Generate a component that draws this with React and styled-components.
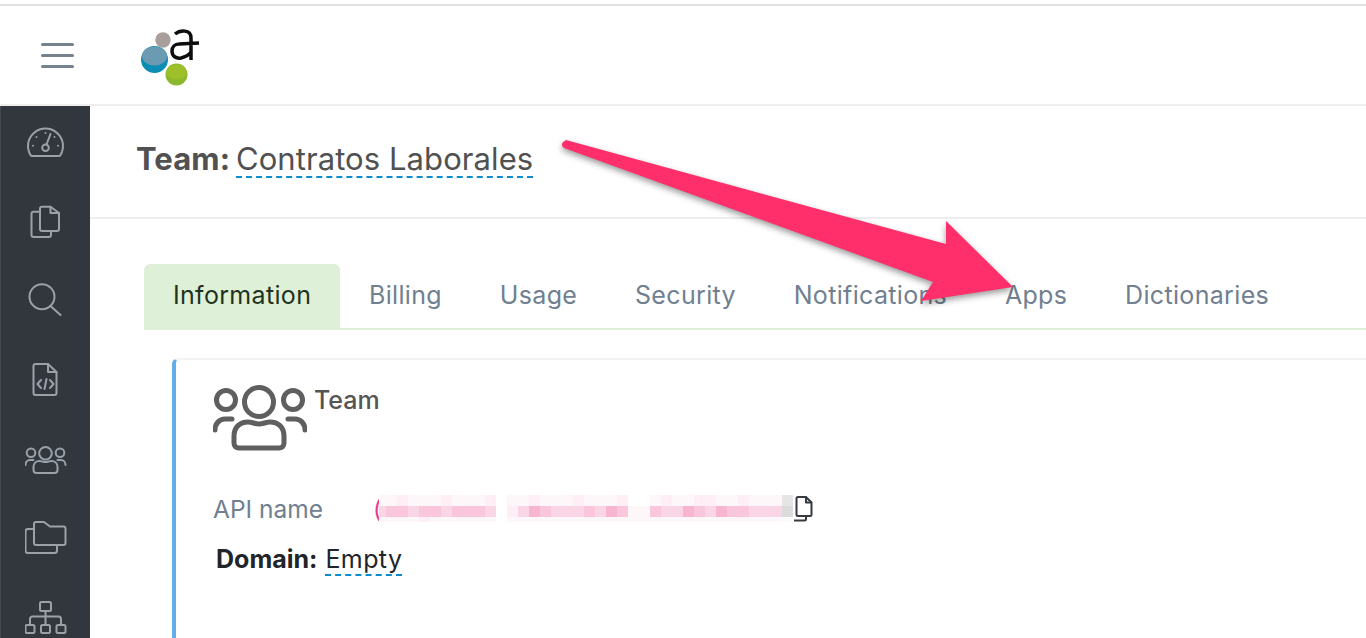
import React from "react"
import styled, { createGlobalStyle } from "styled-components"

const GlobalStyle = createGlobalStyle`
  html, body {
    margin: 0;
    height: 100%;
    background: #fff;
    overflow: hidden;
  }
  body {
    font-family: Inter, "Liberation Sans", sans-serif;
  }
`

const Page = styled.div`
  position: relative;
  width: 1366px;
  height: 638px;
  overflow: hidden;
  padding-top: 4px;
  box-sizing: border-box;
  display: flex;
  flex-direction: column;
`

const Header = styled.header`
  flex: none;
  height: 98px;
  border-top: 2px solid #e1e1e3;
  border-bottom: 2px solid #eee;
  display: flex;
  align-items: center;
  padding-left: 41px;
  gap: 66px;
`

const Burger = styled.div`
  width: 33px;
  display: flex;
  flex-direction: column;
  gap: 8px;
  span {
    display: block;
    height: 3px;
    border-radius: 2px;
    background: #76838f;
  }
`

const Body = styled.div`
  flex: 1;
  display: flex;
  min-height: 0;
`

const Sidebar = styled.nav`
  flex: none;
  width: 89px;
  border-left: 1px solid #44494f;
  background: #32373e;
  display: flex;
  flex-direction: column;
  align-items: center;
  gap: 39px;
  padding-top: 16px;
  svg {
    display: block;
    flex: none;
    width: 42px;
    height: 40px;
    fill: none;
    stroke: #9aa1a9;
    stroke-width: 2;
    stroke-linecap: round;
    stroke-linejoin: round;
  }
`

const Main = styled.main`
  flex: 1;
  min-width: 0;
`

const TitleBar = styled.div`
  height: 113px;
  box-sizing: border-box;
  border-bottom: 2px solid #eee;
  padding: 34px 0 0 46px;
  font-size: 31px;
  letter-spacing: 0.08px;
  line-height: 38px;
  color: #515151;
`

const Strong = styled.b`
  font-weight: 700;
`

const Editable = styled.span`
  display: inline-block;
  border-bottom: 2px dashed #0c8ccd;
  line-height: ${(p) => p.$line}px;
  margin-left: ${(p) => p.$shift}px;
  letter-spacing: ${(p) => p.$track}px;
`

const Content = styled.div`
  padding: 45px 0 0 54px;
`

const Tabs = styled.div`
  display: flex;
  border-bottom: 2px solid #dff0d8;
`

const Tab = styled.div`
  height: 64px;
  box-sizing: border-box;
  padding: 0 28.9px 2px;
  display: flex;
  align-items: center;
  font-size: 25px;
  letter-spacing: 0.33px;
  border-radius: 6px 6px 0 0;
  color: ${(p) => (p.$active ? "#1f3320" : "#708090")};
  background: ${(p) => (p.$active ? "#dff0d8" : "transparent")};
`

const Card = styled.section`
  margin: 28px 0 0 28px;
  height: 300px;
  border-left: 4px solid #63aee9;
  border-top: 2px solid #f2f2f2;
  border-top-left-radius: 6px;
  padding: 25px 0 0 37px;
`

const CardHead = styled.div`
  display: flex;
  align-items: flex-start;
  gap: 7px;
  font-size: 25px;
  font-weight: 500;
  color: #555;
  svg {
    display: block;
    width: 94px;
    height: 66px;
    fill: none;
    stroke: #5f5f5f;
    stroke-width: 5;
    stroke-linecap: round;
    stroke-linejoin: round;
  }
`

const CardTitle = styled.span`
  line-height: 30px;
`

const ApiRow = styled.div`
  display: flex;
  align-items: center;
  margin-top: 42px;
  height: 32px;
`

const ApiLabel = styled.span`
  width: 160px;
  flex: none;
  font-size: 24.5px;
  color: #708090;
`

const Paren = styled.span`
  font-size: 24px;
  color: #e83e8c;
  width: 6px;
  flex: none;
`

const Blur = styled.div`
  position: relative;
  display: flex;
  flex-direction: column;
  flex: none;
  margin-top: -1px;
  background: #fff;
`

const BlurRow = styled.div`
  display: flex;
`

const BlurCell = styled.i`
  display: block;
  width: 11px;
  height: ${(p) => p.$h}px;
  background: rgba(${(p) => (p.$grey ? "170,170,170" : "240,120,170")}, ${(p) => p.$a});
  &:first-child {
    width: 7px;
  }
`

const CopyIcon = styled.svg`
  flex: none;
  width: 20px;
  height: 26px;
  fill: none;
  stroke: #343a40;
  stroke-width: 2;
  stroke-linejoin: round;
`

const DomainRow = styled.div`
  margin: 18px 0 0 3px;
  font-size: 25px;
  line-height: 32px;
  color: #212529;
`

const Arrow = styled.svg`
  position: absolute;
  left: 0;
  top: 0;
  width: 1366px;
  height: 638px;
  pointer-events: none;
  filter: drop-shadow(0 3px 3px rgba(0, 0, 0, 0.4));
`

const tabs = ["Information", "Billing", "Usage", "Security", "Notifications", "Apps", "Dictionaries"]

const top = [1, 1, 2, 1, 1, 1, 2, 1, 1, 1, 2, 0, 1, 1, 2, 1, 1, 1, 2, 1, 1, 1, 2, 0, 0, 1, 2, 1, 1, 2, 2, 1, 1, 2, 1, 1, 1, 3]
const mid = [3, 4, 4, 3, 4, 4, 3, 4, 4, 4, 3, 0, 2, 3, 5, 4, 3, 3, 3, 4, 3, 5, 4, 1, 1, 4, 3, 3, 5, 4, 3, 5, 4, 4, 3, 3, 3, 4]
const low = [1, 1, 1, 1, 2, 1, 1, 1, 1, 1, 1, 0, 1, 1, 1, 1, 1, 1, 1, 1, 1, 1, 1, 1, 1, 1, 1, 1, 1, 1, 1, 1, 1, 1, 1, 1, 1, 1]
const alpha = [0, 0.06, 0.12, 0.3, 0.42, 0.55]

const GaugeIcon = () => (
  <svg viewBox="0 0 42 40">
    <path d="M5.500 33A17.500 17.500 0 1 1 35.500 33a2 2 0 0 1-2 1H7.500a2 2 0 0 1-2-1z" />
    <circle cx="20.500" cy="25.700" r="3.300" />
    <path d="M21.500 22.500L25.500 12" />
    <path d="M20.500 11v.1M11.500 15v.1M29.500 15v.1M8 23.700v.1M33 23.700v.1" />
  </svg>
)

const PagesIcon = () => (
  <svg viewBox="0 0 42 40">
    <path d="M15 10.700H8.500a2 2 0 0 0-2 2V34a2 2 0 0 0 2 2H24a2 2 0 0 0 2-2v-4" />
    <path d="M17 5.700h8.500L34 12v16a2 2 0 0 1-2 2H17a2 2 0 0 1-2-2V7.700a2 2 0 0 1 2-2z" />
    <path d="M25.500 5.700V12H34" />
  </svg>
)

const SearchIcon = () => (
  <svg viewBox="0 0 42 40">
    <circle cx="17" cy="16.700" r="12.500" />
    <path d="M25.500 26L35.500 35" />
  </svg>
)

const CodeFileIcon = () => (
  <svg viewBox="0 0 42 40">
    <path d="M10.500 5H23l8.500 8v21a2 2 0 0 1-2 2h-19a2 2 0 0 1-2-2V7a2 2 0 0 1 2-2z" />
    <path d="M23 5v8h8.500" />
    <path d="M16 21l-3.500 4 3.500 4M25 21l3.500 4-3.500 4M21.500 20l-2 10" />
  </svg>
)

const TeamIcon = ({ className }) => (
  <svg viewBox="0 0 94 66" className={className}>
    <circle cx="13" cy="15" r="9.500" />
    <circle cx="46" cy="17" r="14.500" />
    <circle cx="80" cy="15" r="9.500" />
    <path d="M2 45c0-7 5-11 10-11h7" />
    <path d="M92 45c0-7-5-11-10-11h-7" />
    <path d="M21 58v-7c0-9 6-14 14-14 4 0 7 2 11 2s7-2 11-2c8 0 14 5 14 14v7c0 3-2 5-5 5H26c-3 0-5-2-5-5z" />
  </svg>
)

const SidebarTeamIcon = () => (
  <svg viewBox="0 0 42 40">
    <circle cx="6" cy="14.700" r="4.300" />
    <circle cx="20.500" cy="15.300" r="6.300" />
    <circle cx="35" cy="14.700" r="4.300" />
    <path d="M.5 27c0-3 2-5 4.500-5h3.500M40.500 27c0-3-2-5-4.500-5h-3.500" />
    <path d="M8.500 32v-3c0-4 3-6 6-6 2 0 4 1 6 1s4-1 6-1c3 0 6 2 6 6v3c0 2-1 3-3 3h-18c-2 0-3-1-3-3z" />
  </svg>
)

const FoldersIcon = () => (
  <svg viewBox="0 0 42 40">
    <path d="M11 5h8l6 4.500h13.500a2 2 0 0 1 2 2V26a2 2 0 0 1-2 2H11a2 2 0 0 1-2-2V7a2 2 0 0 1 2-2z" />
    <path d="M9 12H3a2.500 2.500 0 0 0-2.500 2.500V33.500A2.500 2.500 0 0 0 3 36h26.500a2.500 2.500 0 0 0 2.500-2.500V28" />
  </svg>
)

const TreeIcon = () => (
  <svg viewBox="0 0 42 40">
    <rect x="15" y="6" width="11" height="9" rx="1.500" />
    <rect x=".5" y="29" width="9" height="8" rx="1.500" />
    <rect x="16" y="29" width="9" height="8" rx="1.500" />
    <rect x="31.500" y="29" width="9" height="8" rx="1.500" />
    <path d="M20.500 15v14M5 29v-6a2.500 2.500 0 0 1 2.500-2.500h26A2.500 2.500 0 0 1 36 23v6" />
  </svg>
)

const Logo = () => (
  <svg width="62" height="68" viewBox="140 20 62 68">
    <circle cx="163" cy="39" r="7.700" fill="#a89e9c" />
    <circle cx="154.500" cy="58.500" r="13.500" fill="#0b8db4" />
    <ellipse cx="154.500" cy="55" rx="12.500" ry="9.500" fill="#6b9ab3" />
    <circle cx="176.500" cy="73.500" r="11" fill="#8cb82d" />
    <ellipse cx="176.500" cy="71" rx="10" ry="7.500" fill="#9dbf2a" />
    <path
      d="M175 33c5-4 16-5 16 4v22M199 42l-20 1c-4 0-7 3-7 7 0 5 4 8 9 7 4-1 8-3 10-6"
      fill="none"
      stroke="#0d0d0d"
      strokeWidth="3.500"
    />
  </svg>
)

const App = () => {
  return (
    <Page>
      <GlobalStyle />
      <Header>
        <Burger>
          <span />
          <span />
          <span />
        </Burger>
        <Logo />
      </Header>
      <Body>
        <Sidebar>
          <GaugeIcon />
          <PagesIcon />
          <SearchIcon />
          <CodeFileIcon />
          <SidebarTeamIcon />
          <FoldersIcon />
          <TreeIcon />
        </Sidebar>
        <Main>
          <TitleBar>
            <Strong>Team:</Strong>{" "}
            <Editable $line={35} $shift={-3} $track={0.08}>
              Contratos Laborales
            </Editable>
          </TitleBar>
          <Content>
            <Tabs>
              {tabs.map((t, i) => (
                <Tab key={t} $active={i === 0}>
                  {t}
                </Tab>
              ))}
            </Tabs>
            <Card>
              <CardHead>
                <TeamIcon />
                <CardTitle>Team</CardTitle>
              </CardHead>
              <ApiRow>
                <ApiLabel>API name</ApiLabel>
                <Paren>(</Paren>
                <Blur>
                  {[
                    [top, 11],
                    [mid, 11],
                    [low, 5],
                  ].map(([row, h], r) => (
                    <BlurRow key={r}>
                      {row.map((v, c) => (
                        <BlurCell key={c} $h={h} $a={alpha[v]} $grey={c === 37} />
                      ))}
                    </BlurRow>
                  ))}
                </Blur>
                <CopyIcon viewBox="0 0 20 26">
                  <path d="M5 1h8l5.500 5.500V18.500a1.500 1.500 0 0 1-1.500 1.500H5a1.500 1.500 0 0 1-1.500-1.500V2.500A1.500 1.500 0 0 1 5 1z" />
                  <path d="M13 1v5.500h5.500" />
                  <path d="M13 20v3a1.500 1.500 0 0 1-1.500 1.500H1" />
                </CopyIcon>
              </ApiRow>
              <DomainRow>
                <Strong>Domain:</Strong>{" "}
                <Editable $line={29} $shift={1} $track={0.4}>
                  Empty
                </Editable>
              </DomainRow>
            </Card>
          </Content>
        </Main>
      </Body>
      <Arrow viewBox="0 0 1366 638">
        <path
          d="M566 140L946 244V221L1013 287L921 301L933 282L564 148Q559 144 566 140Z"
          fill="#ff2f6b"
        />
      </Arrow>
    </Page>
  )
}

export default App
